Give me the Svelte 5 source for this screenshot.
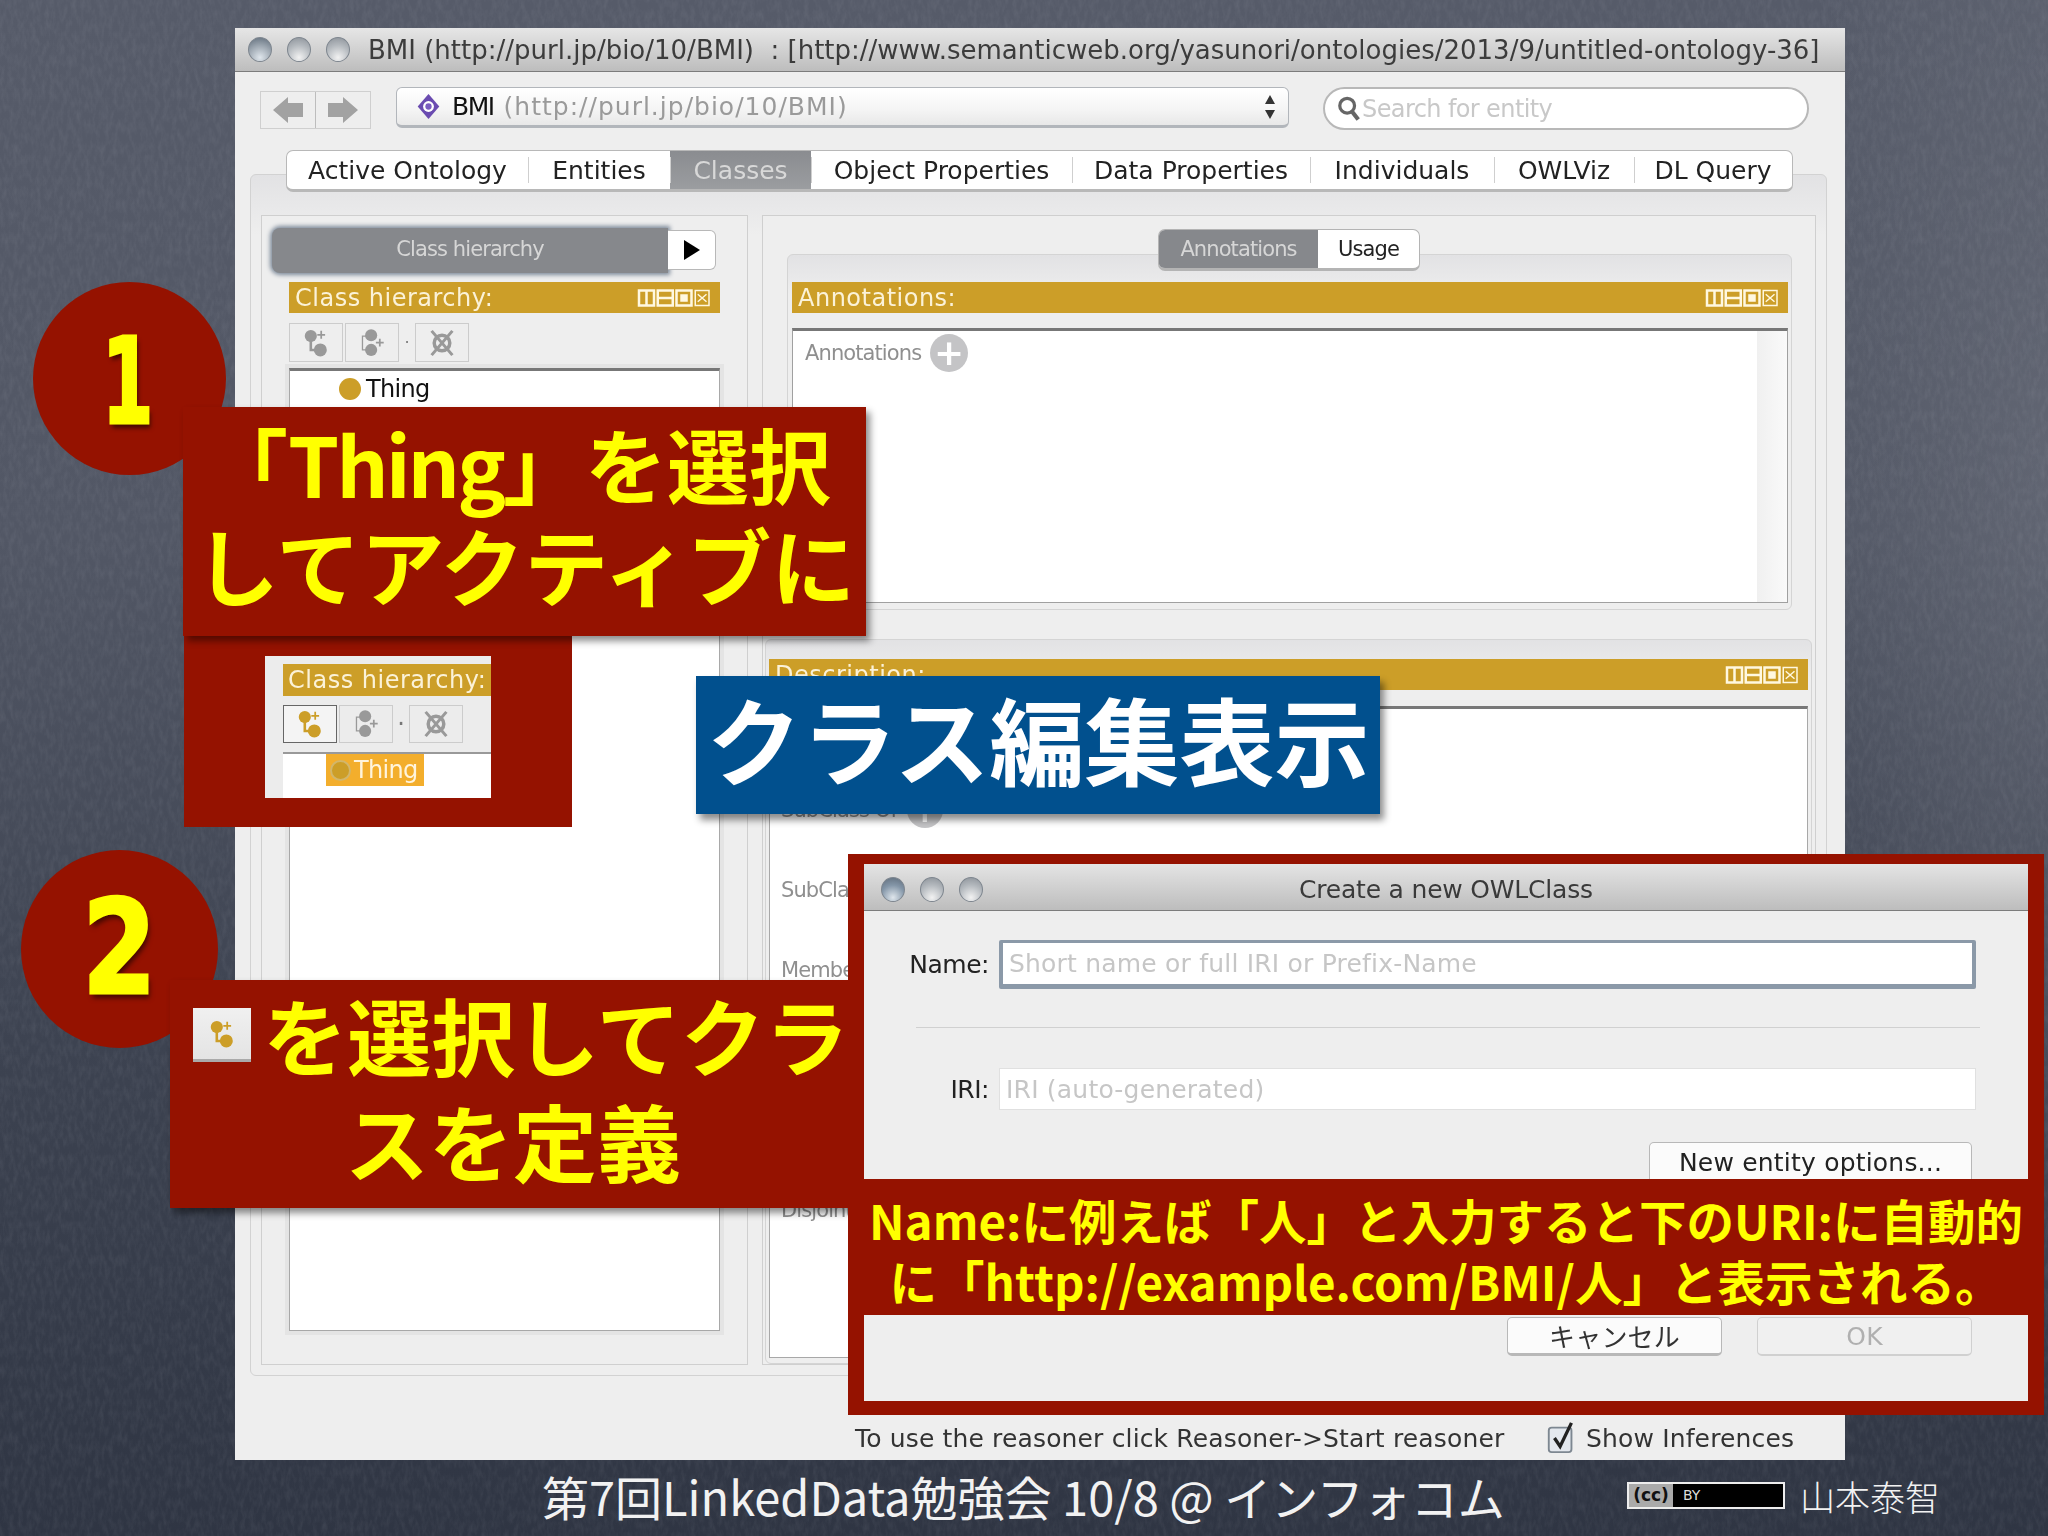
<script>
  const tabs = ['Active Ontology', 'Entities', 'Classes', 'Object Properties', 'Data Properties', 'Individuals', 'OWLViz', 'DL Query'];
  const tabWidths = [241, 142, 141, 261, 238, 184, 140, 158];
  const descRows = ['Equivalent To', 'SubClass Of', 'SubClass Of (Anonymous Ancestor)', 'Members', 'Target for Key', 'Disjoint Union Of', 'Disjoint With'];
</script>

{#snippet addSub(c)}
  <svg class="cls" viewBox="0 0 30 34" style="color:{c}">
    <circle cx="9" cy="9" r="7" fill="currentColor" />
    <path d="M21 3v9M16.500 7.500h9" stroke="currentColor" stroke-width="2" fill="none" />
    <path d="M9 14v11h8" stroke="currentColor" stroke-width="3" fill="none" />
    <circle cx="20" cy="25" r="7.500" fill="currentColor" />
  </svg>
{/snippet}

{#snippet addSib(c)}
  <svg class="cls" viewBox="0 0 30 34" style="color:{c}">
    <path d="M11 9H4v16h7" stroke="currentColor" stroke-width="1.500" fill="none" />
    <circle cx="14" cy="8" r="7" fill="currentColor" />
    <circle cx="14" cy="25" r="7" fill="currentColor" />
    <path d="M24 12v9M19.500 16.500h9" stroke="currentColor" stroke-width="2" fill="none" />
  </svg>
{/snippet}

{#snippet delCls(c)}
  <svg class="cls" viewBox="0 0 30 34" style="color:{c}">
    <circle cx="15" cy="17" r="9" fill="none" stroke="currentColor" stroke-width="4" />
    <path d="M3 3l24 28M27 3L3 31" stroke="currentColor" stroke-width="3.500" />
  </svg>
{/snippet}

{#snippet viewBtns()}
  <svg class="viewbtns" viewBox="0 0 58 16">
    <g fill="none" stroke="#fff8e0" stroke-width="2">
      <rect x="1" y="2" width="12" height="12" /><path d="M7 2v12" />
      <rect x="16" y="2" width="12" height="12" /><path d="M16 8h12" />
      <rect x="31" y="2" width="12" height="12" /><rect x="35" y="6" width="4" height="4" fill="#fff8e0" />
    </g>
    <g fill="none" stroke="#fff8e0" stroke-width="1.200">
      <rect x="46" y="2" width="11" height="12" /><path d="M48 5l7 6M55 5l-7 6" />
    </g>
  </svg>
{/snippet}

{#snippet lights(first)}
  <div class="lights">
    <i style="background:radial-gradient(circle at 50% 85%, #dfe6ec, {first} 55%, #5f6c7a 100%)"></i>
    <i></i>
    <i></i>
  </div>
{/snippet}

<div class="slide">
  <svg class="chalk" width="2048" height="1536">
    <filter id="grain">
      <feTurbulence type="fractalNoise" baseFrequency="0.22 0.09" numOctaves="3" seed="7" />
      <feColorMatrix values="0 0 0 0 0.8  0 0 0 0 0.82  0 0 0 0 0.88  0.9 0 0 0 -0.33" />
    </filter>
    <rect width="2048" height="1536" filter="url(#grain)" opacity="0.14" />
  </svg>

  <div class="window">
    <div class="titlebar">
      {@render lights('#9aa4ae')}
      <span class="wintitle">BMI (http://purl.jp/bio/10/BMI)  : [http://www.semanticweb.org/yasunori/ontologies/2013/9/untitled-ontology-36]</span>
    </div>

    <div class="toolbar">
      <div class="nav">
        <span>
          <svg viewBox="0 0 32 26" width="32" height="26"><path d="M1 13L16 0v6h15v14H16v6z" fill="#a2a2a2" /></svg>
        </span>
        <span>
          <svg viewBox="0 0 32 26" width="32" height="26"><path d="M31 13L16 0v6H1v14h15v6z" fill="#a2a2a2" /></svg>
        </span>
      </div>
      <div class="combo">
        <svg viewBox="0 0 28 30" width="27" height="27">
          <path d="M14 1l12 14-12 14L2 15z" fill="#6a4bb0" />
          <circle cx="14" cy="15" r="6" fill="#fff" /><circle cx="14" cy="15" r="3.500" fill="#7a5cc0" />
        </svg>
        <span class="bmi">BMI</span>
        <span class="iri">(http://purl.jp/bio/10/BMI)</span>
        <svg class="stepper" viewBox="0 0 12 26" width="12" height="26"><path d="M6 1l5 9H1zM6 25l5-9H1z" fill="#333" /></svg>
      </div>
      <div class="search">
        <svg viewBox="0 0 26 28" width="24" height="27">
          <circle cx="11" cy="11" r="8" fill="none" stroke="#666" stroke-width="3.500" />
          <path d="M16 17l7 9" stroke="#666" stroke-width="4.500" />
        </svg>
        <span>Search for entity</span>
      </div>
    </div>

    <div class="tabs">
      {#each tabs as t, i}
        <div class="tab" class:on={t === 'Classes'} style="width:{tabWidths[i]}px">{t}</div>
      {/each}
    </div>

    <div class="pane">
      <section class="left">
        <div class="selector">
          <div class="selbtn">Class hierarchy</div>
          <div class="arrowbtn"><svg viewBox="0 0 16 20" width="16" height="20"><path d="M0 0l16 10L0 20z" fill="#000" /></svg></div>
        </div>
        <div class="viewhead lefthead"><span>Class hierarchy:</span>{@render viewBtns()}</div>
        <div class="iconrow">
          <button class="ib">{@render addSub('#999')}</button>
          <button class="ib">{@render addSib('#999')}</button>
          <span class="dot">·</span>
          <button class="ib">{@render delCls('#999')}</button>
        </div>
        <div class="tree">
          <div class="thing"><i></i>Thing</div>
        </div>
      </section>

      <section class="right">
        <div class="subtabs">
          <div class="sub on">Annotations</div>
          <div class="sub">Usage</div>
        </div>
        <div class="group">
          <div class="viewhead"><span>Annotations:</span>{@render viewBtns()}</div>
          <div class="annot">
            <span class="lbl">Annotations</span>
            <span class="plus">+</span>
            <div class="scrolltrack"></div>
          </div>
        </div>
        <div class="group desc">
          <div class="viewhead"><span>Description:</span>{@render viewBtns()}</div>
          <div class="desclist">
            {#each descRows as r}
              <div class="drow"><span class="lbl">{r}</span><span class="plus small">+</span></div>
            {/each}
          </div>
        </div>
      </section>
    </div>

    <div class="status">
      <span class="st">To use the reasoner click Reasoner-&gt;Start reasoner</span>
      <svg viewBox="0 0 30 36" width="30" height="34">
        <rect x="1" y="7" width="24" height="26" rx="3" fill="#e4e8ee" stroke="#7d8791" stroke-width="2" />
        <path d="M7 18l6 9L25 2" fill="none" stroke="#222" stroke-width="3.500" />
      </svg>
      <span class="si">Show Inferences</span>
    </div>
  </div>

  <div class="footer">
    <span class="ftitle">第7回LinkedData勉強会 10/8 @ インフォコム</span>
    <div class="cc"><span class="cclogo">(cc)</span><span class="by">BY</span></div>
    <span class="author">山本泰智</span>
  </div>

  <!-- callouts sit on top of the screenshot -->
  <div class="circle c1"><span>1</span></div>
  <div class="redbox thumb">
    <div class="mini">
      <div class="minihead">Class hierarchy:</div>
      <div class="minirow">
        <span class="mb active">{@render addSub('#cc9e28')}</span>
        <span class="mb">{@render addSib('#999')}</span>
        <span class="mdot">·</span>
        <span class="mb">{@render delCls('#999')}</span>
      </div>
      <div class="minitree"><div class="sel"><i></i>Thing</div></div>
    </div>
  </div>
  <div class="redbox call1">
    <div>「<span class="tight">Thing</span>」を選択</div>
    <div class="wide">してアクティブに</div>
  </div>

  <div class="blue">クラス編集表示</div>

  <div class="circle c2"><span>2</span></div>
  <div class="redbox call2">
    <div class="l1"><span class="tinyicon">{@render addSub('#cc9e28')}</span>を選択してクラ</div>
    <div>スを定義</div>
  </div>

  <div class="frame">
    <div class="dialog">
      <div class="dtitle">
        {@render lights('#8496a8')}
        <span>Create a new OWLClass</span>
      </div>
      <div class="frow name">
        <label for="nm">Name:</label>
        <div id="nm" class="field focus">Short name or full IRI or Prefix-Name</div>
      </div>
      <div class="sep"></div>
      <div class="frow iri2">
        <label for="ir">IRI:</label>
        <div id="ir" class="field">IRI (auto-generated)</div>
      </div>
      <div class="btnline newent"><div class="btn">New entity options...</div></div>
      <div class="btnline okline">
        <div class="btn cancel">キャンセル</div>
        <div class="btn ok">OK</div>
      </div>
    </div>
    <div class="band">
      <div>Name:に例えば「人」と入力すると下のURI:に自動的</div>
      <div>に「http://example.com/BMI/人」と表示される。</div>
    </div>
  </div>
</div>

<style>
  :global(body) {
    margin: 0;
    background: #3a4050;
  }

  .slide {
    position: relative;
    width: 2048px;
    height: 1536px;
    overflow: hidden;
    box-sizing: border-box;
    padding: 28px 0 0 235px;
    font-family: "DejaVu Sans", sans-serif;
    background:
      radial-gradient(ellipse 260px 900px at 2048px 480px, rgba(110, 114, 126, 0.5), transparent),
      linear-gradient(180deg, #565b69 0, #525765 35%, #3d4351 68%, #2f3543 100%);
  }
  .chalk {
    position: absolute;
    left: 0;
    top: 0;
  }

  .window {
    position: relative;
    width: 1610px;
    height: 1432px;
    display: flex;
    flex-direction: column;
    background: #eeeeee;
    filter: blur(0.6px);
  }

  .titlebar {
    height: 44px;
    flex: none;
    display: flex;
    align-items: center;
    padding-left: 13px;
    background: linear-gradient(180deg, #e6e6e6, #bdbdbd);
    border-bottom: 1px solid #7c7c7c;
    box-sizing: border-box;
  }
  .lights {
    display: flex;
    gap: 15px;
  }
  .lights i {
    width: 24px;
    height: 25px;
    border-radius: 50%;
    box-sizing: border-box;
    border: 1.500px solid #7d858e;
    background: radial-gradient(circle at 50% 85%, #f2f2f2, #b4b9be 55%, #8a9097 100%);
  }
  .wintitle {
    margin-left: 18px;
    font-size: 26px;
    color: #3c3c3c;
    white-space: pre;
  }

  .toolbar {
    display: flex;
    align-items: flex-start;
    margin-top: 15px;
    padding-left: 25px;
    flex: none;
  }
  .nav {
    display: flex;
    width: 111px;
    height: 38px;
    margin-top: 4px;
    box-sizing: border-box;
    border: 1px solid #cfcfcf;
  }
  .nav span {
    flex: 1;
    display: flex;
    align-items: center;
    justify-content: center;
  }
  .nav span + span {
    border-left: 1px solid #bdbdbd;
  }
  .combo {
    width: 893px;
    height: 41px;
    margin-left: 25px;
    box-sizing: border-box;
    display: flex;
    align-items: center;
    gap: 10px;
    padding: 0 12px 0 18px;
    border: 1.500px solid #b2b6bb;
    border-bottom-width: 3px;
    border-radius: 6px;
    background: linear-gradient(180deg, #fff, #f4f4f4 60%, #e8e8e8);
    font-size: 25px;
  }
  .bmi {
    color: #111;
    letter-spacing: -1.500px;
  }
  .iri {
    color: #9a9a9a;
    letter-spacing: 1px;
  }
  .stepper {
    margin-left: auto;
  }
  .search {
    width: 486px;
    height: 43px;
    margin-left: 34px;
    box-sizing: border-box;
    display: flex;
    align-items: center;
    padding-left: 12px;
    gap: 1px;
    background: #fff;
    border: 2px solid #b8b8b8;
    border-radius: 22px;
    color: #c8c8c8;
    font-size: 24px;
    letter-spacing: -0.600px;
  }

  .tabs {
    position: relative;
    z-index: 1;
    display: flex;
    flex: none;
    margin: 20px 0 0 51px;
    width: fit-content;
    height: 42px;
    box-sizing: border-box;
    background: #fff;
    border: 1px solid #b8b8b8;
    border-bottom-width: 3px;
    border-radius: 7px;
    overflow: hidden;
  }
  .tab {
    display: flex;
    align-items: center;
    justify-content: center;
    font-size: 25px;
    color: #222;
    box-sizing: border-box;
    position: relative;
    white-space: nowrap;
  }
  .tab + .tab::before {
    content: "";
    position: absolute;
    left: 0;
    top: 6px;
    bottom: 6px;
    width: 1px;
    background: #cfcfcf;
  }
  .tab.on {
    background: linear-gradient(180deg, #8a8c90, #9b9da0);
    color: #d8d8d8;
  }

  .pane {
    flex: none;
    height: 1202px;
    margin: -18px 18px 0 15px;
    box-sizing: border-box;
    padding: 40px 10px 10px;
    display: flex;
    gap: 14px;
    border: 1.500px solid #d2d2d2;
    border-radius: 6px;
    background: linear-gradient(180deg, #e2e2e4, #eeeeee 60px);
  }
  .left {
    width: 487px;
    flex: none;
    box-sizing: border-box;
    border: 1.500px solid #cfcfcf;
    padding-top: 12px;
    display: flex;
    flex-direction: column;
    background: #eee;
  }
  .selector {
    display: flex;
    margin-left: 10px;
  }
  .selbtn {
    width: 396px;
    height: 45px;
    padding-bottom: 4px;
    box-sizing: border-box;
    display: flex;
    align-items: center;
    justify-content: center;
    background: #86888c;
    color: #d6d6d6;
    font-size: 21px;
    letter-spacing: -0.900px;
    border-radius: 8px 0 0 8px;
    box-shadow: 0 0 4px 2px #7d8a9a;
  }
  .arrowbtn {
    width: 48px;
    height: 40px;
    margin-top: 2px;
    box-sizing: border-box;
    display: flex;
    align-items: center;
    justify-content: center;
    background: #fff;
    border: 1.500px solid #b8b8b8;
    border-left: none;
    border-radius: 0 6px 6px 0;
  }
  .viewhead {
    height: 31px;
    flex: none;
    box-sizing: border-box;
    display: flex;
    align-items: center;
    justify-content: space-between;
    padding: 0 6px 0 6px;
    background: #cc9e28;
    color: #fbf2d8;
    font-size: 24px;
    letter-spacing: 0.500px;
  }
  .lefthead {
    margin: 9px 27px 0 27px;
  }
  .viewbtns {
    width: 80px;
    height: 20px;
  }
  .iconrow {
    display: flex;
    align-items: center;
    height: 39px;
    margin: 10px 0 0 27px;
    gap: 2px;
  }
  .ib {
    width: 54px;
    height: 39px;
    padding: 0;
    display: flex;
    align-items: center;
    justify-content: center;
    background: #eee;
    border: 1.500px solid #cccccc;
  }
  .cls {
    width: 26px;
    height: 30px;
  }
  .dot {
    width: 12px;
    text-align: center;
    color: #777;
  }
  .tree {
    flex: 1;
    margin: 6px 27px 33px 27px;
    background: #fff;
    border: 1.500px solid #a8a8a8;
    border-top: 3px solid #777;
    box-shadow: 0 0 0 4px #e4e4e4;
  }
  .thing {
    display: flex;
    align-items: center;
    gap: 5px;
    margin: 4px 0 0 49px;
    font-size: 24px;
    letter-spacing: -0.700px;
    color: #111;
  }
  .thing i {
    width: 22px;
    height: 22px;
    border-radius: 50%;
    background: #cc9e28;
  }

  .right {
    flex: 1;
    min-width: 0;
    box-sizing: border-box;
    border: 1.500px solid #cfcfcf;
    padding-top: 13px;
    display: flex;
    flex-direction: column;
    background: #eee;
  }
  .subtabs {
    position: relative;
    z-index: 1;
    display: flex;
    height: 42px;
    margin-left: 395px;
    width: 262px;
    flex: none;
    box-sizing: border-box;
    border: 1.500px solid #b4b4b4;
    border-bottom-width: 3px;
    border-radius: 7px;
    overflow: hidden;
    background: #fff;
    font-size: 21px;
    letter-spacing: -0.900px;
  }
  .sub {
    display: flex;
    align-items: center;
    justify-content: center;
    flex: 1;
    color: #222;
  }
  .sub.on {
    flex: none;
    width: 159px;
    background: #86888c;
    color: #d6d6d6;
  }
  .group {
    margin: -17px 23px 0 24px;
    padding: 27px 3px 6px 4px;
    box-sizing: border-box;
    border: 1.500px solid #d4d4d4;
    border-radius: 6px;
    background: linear-gradient(180deg, #e2e2e4 0, #eeeeee 40px);
  }
  .annot {
    position: relative;
    height: 275px;
    margin-top: 15px;
    box-sizing: border-box;
    padding: 3px 0 0 12px;
    display: flex;
    align-items: center;
    align-content: flex-start;
    flex-wrap: wrap;
    gap: 9px;
    background: #fff;
    border: 1.500px solid #a0a0a0;
    border-top: 3px solid #777;
  }
  .scrolltrack {
    position: absolute;
    right: 0;
    top: 0;
    bottom: 0;
    width: 30px;
    background: linear-gradient(90deg, #f0f0f0, #fafafa);
  }
  .lbl {
    color: #8f8f8f;
    font-size: 21px;
    letter-spacing: -0.900px;
    white-space: nowrap;
  }
  .plus {
    width: 38px;
    height: 38px;
    border-radius: 50%;
    background: #c4c4c6;
    color: #fff;
    display: flex;
    align-items: center;
    justify-content: center;
    font-size: 36px;
    font-weight: bold;
    line-height: 1;
  }
  .group.desc {
    margin: 29px 3px 0 2px;
    padding: 19px 3px 5px 3px;
    flex: 1;
    display: flex;
    flex-direction: column;
  }
  .desclist {
    flex: 1;
    margin-top: 16px;
    box-sizing: border-box;
    padding: 6px 0 0 11px;
    display: flex;
    flex-direction: column;
    gap: 50px;
    background: #fff;
    border: 1.500px solid #a8a8a8;
    border-top: 3px solid #777;
    overflow: hidden;
  }
  .drow {
    height: 30px;
    display: flex;
    align-items: center;
    gap: 10px;
  }
  .plus.small {
    width: 36px;
    height: 36px;
    flex: none;
  }

  .status {
    flex: none;
    display: flex;
    align-items: center;
    margin-top: 45px;
    padding-left: 620px;
    color: #333;
    font-size: 25px;
    letter-spacing: 0.150px;
  }
  .st {
    width: 692px;
    flex: none;
  }
  .si {
    margin-left: 9px;
  }

  .footer {
    position: absolute;
    left: 542px;
    top: 1470px;
    display: flex;
    align-items: center;
    height: 50px;
    color: #f2f2f2;
    font-family: "Noto Sans CJK JP", sans-serif;
    font-size: 47px;
    white-space: nowrap;
  }
  .ftitle {
    width: 1085px;
    flex: none;
  }
  .cc {
    width: 158px;
    height: 27px;
    flex: none;
    box-sizing: border-box;
    border: 2px solid #eee;
    background: #000;
    display: flex;
    align-items: center;
    font-size: 14px;
    font-family: "DejaVu Sans", sans-serif;
  }
  .cclogo {
    background: #aaa;
    color: #111;
    width: 44px;
    height: 100%;
    display: flex;
    align-items: center;
    justify-content: center;
    font-size: 17px;
    font-weight: bold;
  }
  .by {
    margin-left: 10px;
    color: #ddd;
  }
  .author {
    margin-left: 15px;
    font-size: 35px;
    font-weight: 300;
  }

  .redbox {
    position: absolute;
    background: #951200;
    box-sizing: border-box;
    font-family: "Noto Sans CJK JP", sans-serif;
    font-weight: 700;
    color: #ffff00;
    font-size: 84px;
    text-align: center;
    white-space: nowrap;
    box-shadow: 4px 5px 7px rgba(0, 0, 0, 0.45);
  }
  .tight {
    letter-spacing: -3px;
  }
  .circle {
    position: absolute;
    border-radius: 50%;
    background: #951200;
    display: flex;
    align-items: center;
    justify-content: center;
    color: #ffff00;
    font-family: "DejaVu Sans", sans-serif;
    font-weight: 700;
    font-size: 120px;
    -webkit-text-stroke: 3px #ffff00;
    text-shadow: 3px 5px 6px rgba(0, 0, 0, 0.55);
  }
  .c1 {
    left: 33px;
    top: 282px;
    width: 193px;
    height: 193px;
  }
  .c1 span {
    display: block;
    transform: translate(-2px, 3px) scaleX(0.62);
  }
  .c2 {
    left: 21px;
    top: 850px;
    width: 197px;
    height: 198px;
    font-size: 130px;
  }
  .c2 span {
    display: block;
    transform: translate(0, -1px) scaleX(0.82);
  }
  .call1 {
    left: 183px;
    top: 407px;
    width: 683px;
    height: 229px;
    padding: 5px 12px 0 0;
    font-size: 82px;
    line-height: 101px;
  }
  .call1 .wide {
    font-size: 84px;
    padding-left: 12px;
  }
  .thumb {
    left: 184px;
    top: 635px;
    width: 388px;
    height: 192px;
    padding: 21px 81px 29px 81px;
    box-shadow: none;
  }
  .mini {
    width: 226px;
    height: 142px;
    background: #ececec;
    padding: 8px 0 0 18px;
    box-sizing: border-box;
    font-family: "DejaVu Sans", sans-serif;
    font-weight: 400;
    font-size: 24px;
    text-align: left;
    overflow: hidden;
    filter: blur(0.5px);
  }
  .minihead {
    background: #cc9e28;
    color: #fbf2d8;
    height: 32px;
    line-height: 32px;
    padding-left: 5px;
    letter-spacing: 0.500px;
  }
  .minirow {
    display: flex;
    align-items: center;
    gap: 2px;
    margin-top: 9px;
  }
  .mb {
    width: 54px;
    height: 38px;
    flex: none;
    display: flex;
    align-items: center;
    justify-content: center;
    box-sizing: border-box;
    border: 1.500px solid #ccc;
  }
  .mb.active {
    background: #f4f4f4;
    border-color: #666;
  }
  .mdot {
    width: 12px;
    color: #777;
    text-align: center;
  }
  .minitree {
    height: 50px;
    margin-top: 9px;
    background: #fff;
    border-top: 2px solid #999;
    padding: 0 0 0 43px;
  }
  .sel {
    width: 98px;
    height: 32px;
    background: #f3ae2c;
    display: flex;
    align-items: center;
    color: #fff4dc;
    letter-spacing: -0.700px;
    gap: 3px;
    padding-left: 4px;
    box-sizing: border-box;
  }
  .sel i {
    width: 21px;
    height: 21px;
    flex: none;
    box-sizing: border-box;
    border-radius: 50%;
    background: #cc9e28;
    border: 2px solid #d2b66a;
  }

  .blue {
    position: absolute;
    left: 696px;
    top: 676px;
    width: 684px;
    height: 138px;
    padding-bottom: 16px;
    box-sizing: border-box;
    background: #01508e;
    color: #fff;
    display: flex;
    align-items: center;
    justify-content: center;
    font-family: "Noto Sans CJK JP", sans-serif;
    font-weight: 700;
    font-size: 95px;
    box-shadow: 4px 6px 7px rgba(0, 0, 0, 0.45);
    white-space: nowrap;
  }

  .call2 {
    left: 170px;
    top: 980px;
    width: 686px;
    height: 228px;
    padding-top: 1px;
    line-height: 106px;
  }
  .l1 {
    display: flex;
    align-items: center;
    justify-content: center;
    gap: 12px;
  }
  .tinyicon {
    width: 58px;
    height: 54px;
    background: linear-gradient(180deg, #f0f0f0, #e4e4e4);
    border-bottom: 3px solid #aaa;
    box-sizing: border-box;
    display: flex;
    align-items: center;
    justify-content: center;
    margin-left: 16px;
    margin-top: 2px;
  }

  .frame {
    position: absolute;
    left: 848px;
    top: 854px;
    width: 1196px;
    height: 561px;
    box-sizing: border-box;
    padding: 10px 16px 14px 16px;
    background: #951200;
  }
  .dialog {
    height: 100%;
    background: #eeeeee;
    font-size: 25px;
    color: #222;
    letter-spacing: 0.200px;
    filter: blur(0.5px);
  }
  .dtitle {
    position: relative;
    height: 47px;
    display: flex;
    align-items: center;
    padding: 4px 0 0 17px;
    box-sizing: border-box;
    background: linear-gradient(180deg, #e4e4e4, #bdbdbd);
    border-bottom: 1px solid #7c7c7c;
  }
  .dtitle span {
    position: absolute;
    left: 435px;
    color: #3a3a3a;
    font-size: 25px;
    letter-spacing: -0.200px;
  }
  .frow {
    display: flex;
    align-items: center;
    gap: 10px;
  }
  .frow label {
    width: 125px;
    text-align: right;
    flex: none;
    letter-spacing: -0.500px;
  }
  .name {
    margin-top: 29px;
  }
  .iri2 {
    margin-top: 40px;
  }
  .field {
    width: 977px;
    box-sizing: border-box;
    padding-left: 6px;
    display: flex;
    align-items: center;
    background: #fff;
    color: #c6c6c6;
    height: 42px;
    border: 1.500px solid #e0e0e0;
  }
  .field.focus {
    height: 49px;
    border: 4px solid #8b99a8;
    border-top-width: 3px;
    border-bottom-width: 5px;
    border-radius: 2px;
  }
  .sep {
    height: 1px;
    margin: 38px 48px 0 52px;
    background: #d0d0d0;
  }
  .btnline {
    display: flex;
    justify-content: flex-end;
    padding-right: 56px;
  }
  .newent {
    margin-top: 32px;
  }
  .okline {
    margin-top: 133px;
    gap: 35px;
  }
  .btn {
    height: 39px;
    box-sizing: border-box;
    display: flex;
    align-items: center;
    justify-content: center;
    background: #fbfbfb;
    border: 1.500px solid #b8b8b8;
    border-bottom-width: 3px;
    border-radius: 5px;
  }
  .newent .btn {
    width: 323px;
    height: 42px;
  }
  .cancel, .ok {
    width: 215px;
  }
  .cancel {
    font-family: "Noto Sans CJK JP", sans-serif;
    font-size: 26px;
    color: #333;
  }
  .ok {
    color: #b0b0b0;
    background: #f0f0f0;
    border-color: #d0d0d0;
    border-bottom-width: 2px;
  }
  .band {
    position: absolute;
    left: 16px;
    right: 16px;
    top: 325px;
    height: 136px;
    padding-top: 10px;
    box-sizing: border-box;
    background: #951200;
    color: #ffff00;
    font-family: "Noto Sans CJK JP", sans-serif;
    font-weight: 700;
    font-size: 47.500px;
    line-height: 61px;
    text-align: center;
    white-space: nowrap;
  }
</style>
